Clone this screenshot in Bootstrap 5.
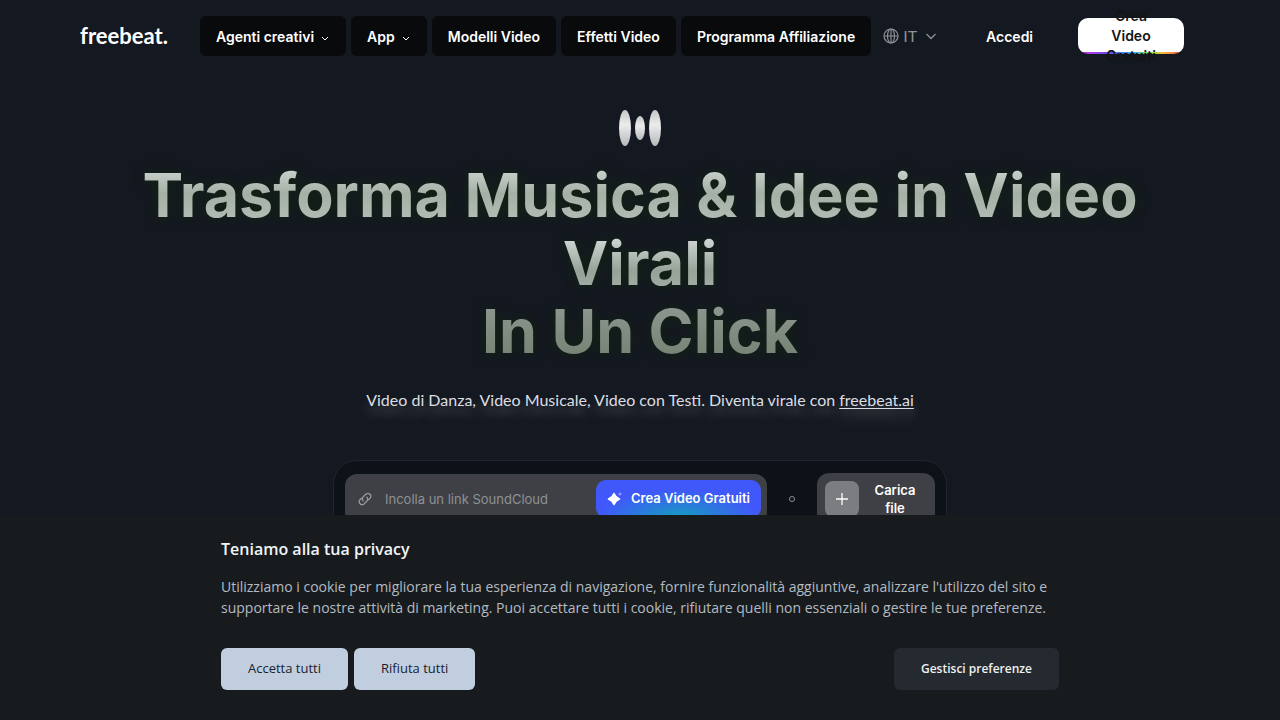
<!DOCTYPE html>
<html lang="it">
<head>
<meta charset="utf-8">
<meta name="viewport" content="width=device-width, initial-scale=1">
<title>freebeat.ai – Trasforma Musica &amp; Idee in Video Virali</title>
<link href="https://cdn.jsdelivr.net/npm/bootstrap@5.3.0/dist/css/bootstrap.min.css" rel="stylesheet">
<style>
  body { background: #141820; color: #fff; font-family: Inter, "Open Sans", sans-serif; min-height: 100vh; overflow-x: hidden; }
  .site-header { max-width: 1200px; height: 72px; padding: 0 56px 0 40px; }
  .brand { width: 120px; font-family: Lato, sans-serif; font-size: 22px; font-weight: 700; line-height: 24px; }
  .menu { gap: 5px; }
  .menu-btn { height: 40px; padding: 0 16px; background: #090a0b; border: 0; border-radius: 6px; color: #fff; font-size: 14px; font-weight: 600; white-space: nowrap; }
  .menu-btn svg { margin-left: 6px; }
  .menu-btn:hover, .menu-btn:focus { background: #1b1d20; color: #fff; }
  .lang-btn { color: #8d9095; font-family: Lato, sans-serif; font-size: 16px; border: 0; padding: 0; }
  .login-link { font-size: 14px; font-weight: 600; color: #fff; }
  .cta { width: 106px; height: 36px; padding: 0 20px; border: 0; border-radius: 10px; color: #141414; font-size: 14px; font-weight: 600; line-height: 20px;
    background: linear-gradient(90deg, #d63ad8, #6a48f0 28%, #28a8f5 52%, #8fdc3c 68%, #f6b83c 80%, #f0484a) bottom / 100% 2px no-repeat, #fff; }
  .hero { padding-top: 38px; }
  .headline { max-width: 1000px; margin: 15px auto 0; font-size: 61px; font-weight: 700; line-height: 68px; color: transparent;
    background: linear-gradient(180deg, #d8dcdb 0, #a5b0a5 16%, #b4bdb6 30%, #d8dcdb 36%, #96a398 54%, #a5afa8 65%, #8c958e 72%, #72806f 100%); background-clip: text; -webkit-background-clip: text; filter: drop-shadow(0 0 6px #10240f); }
  .tagline { margin: 23px 0 0; font-family: Lato, sans-serif; font-size: 16px; line-height: 24px; color: #dcdee3; text-shadow: 0 8px 12px rgba(255,255,255,.3); }
  .tagline a { color: inherit; text-underline-offset: 2px; }
  .composer { max-width: 614px; margin-top: 48px; padding: 12px 11px; background: #0d1118; border: 1px solid #20242b; border-radius: 24px; }
  .link-field { height: 50px; padding: 6px 6px 6px 12px; background: #3e4045; border-radius: 12px; }
  .link-field input { background: none; border: 0; color: #fff; font-size: 13px; line-height: 20px; outline: 0; min-width: 0; }
  .link-field input::placeholder { color: #8e9196; }
  .create-btn { height: 38px; padding: 0 11px; border: 0; border-radius: 10px; color: #fff; font-size: 13px; font-weight: 600; white-space: nowrap; background: radial-gradient(ellipse 80px 28px at 50% 100%, #149fbd, #4058fa); }
  .or-dot { width: 6px; height: 6px; margin: 0 22px; border: 1px solid #8e9196; border-radius: 50%; }
  .upload-btn { width: 118px; height: 52px; padding: 8px; border: 0; border-radius: 12px; background: #3e4045; color: #fff; font-size: 13px; font-weight: 600; line-height: 18px; }
  .plus-tile { width: 34px; height: 36px; border-radius: 8px; background: #7b7d80; }
  .consent { background: #181b1e; font-family: "Open Sans", "Noto Sans", sans-serif; padding: 23px 24px 30px; }
  .consent-body { max-width: 838px; }
  .consent h2 { font-size: 16px; line-height: 22px; font-weight: 600; color: #f2f5f8; margin: 0 0 16px; }
  .consent p { font-size: 14px; line-height: 21px; color: #b3bac2; margin: 0 0 30px; }
  .consent-actions { gap: 6px; }
  .consent-btn { height: 42px; padding: 0 27px; border: 0; border-radius: 6px; font-size: 13px; font-weight: 500; background: #c1cee0; color: #18222d; }
  .consent-btn.manage { background: #252930; color: #eef1f4; font-size: 12px; font-weight: 600; }
</style>
</head>
<body>
<header class="site-header container-fluid d-flex align-items-center">
  <a class="brand text-white text-decoration-none flex-shrink-0" href="#">freebeat.</a>
  <nav class="menu d-flex flex-shrink-0" aria-label="Principale">
    <button class="btn menu-btn" type="button">Agenti creativi<svg width="10" height="10" viewBox="0 0 10 10" fill="none" stroke="currentColor" aria-hidden="true"><path d="m2 4 3 3 3-3"/></svg></button>
    <button class="btn menu-btn" type="button">App<svg width="10" height="10" viewBox="0 0 10 10" fill="none" stroke="currentColor" aria-hidden="true"><path d="m2 4 3 3 3-3"/></svg></button>
    <button class="btn menu-btn" type="button">Modelli Video</button>
    <button class="btn menu-btn" type="button">Effetti Video</button>
    <button class="btn menu-btn" type="button">Programma Affiliazione</button>
  </nav>
  <button class="btn lang-btn d-flex align-items-center gap-1 flex-shrink-0 ms-2 px-1" type="button" aria-label="Lingua: IT">
    <svg width="16" height="16" viewBox="0 0 16 16" fill="none" stroke="currentColor" stroke-width="1.2" aria-hidden="true"><circle cx="8" cy="8" r="7"/><ellipse cx="8" cy="8" rx="3.5" ry="7"/><path d="M1 8h14M8 1v14"/></svg>
    <span>IT</span>
    <svg class="ms-1" width="12" height="12" viewBox="0 0 12 12" fill="none" stroke="currentColor" stroke-width="1.3" aria-hidden="true"><path d="m1.500 4 4.500 4.500L10.500 4"/></svg>
  </button>
  <a class="login-link text-decoration-none ms-auto" href="#">Accedi</a>
  <button class="btn cta d-flex align-items-center justify-content-center flex-shrink-0 ms-auto" type="button">Crea Video Gratuiti</button>
</header>

<main class="hero text-center">
  <svg class="d-block mx-auto" width="44" height="36" viewBox="0 0 44 36" aria-hidden="true">
    <defs><linearGradient id="bar" x1="0" x2="0" y1="0" y2="1"><stop offset="0" stop-color="#c3c5c7"/><stop offset=".4" stop-color="#ececec"/><stop offset="1" stop-color="#b6b8ba"/></linearGradient></defs>
    <g fill="url(#bar)"><ellipse cx="7" cy="18" rx="6" ry="18"/><ellipse cx="22" cy="18" rx="5" ry="12"/><ellipse cx="37" cy="18" rx="6" ry="18"/></g>
  </svg>
  <h1 class="headline">Trasforma Musica &amp; Idee in Video Virali<br>In Un Click</h1>
  <p class="tagline">Video di Danza, Video Musicale, Video con Testi. Diventa virale con <a href="#">freebeat.ai</a></p>
  <form class="composer mx-auto d-flex align-items-center">
    <div class="link-field d-flex align-items-center flex-grow-1">
      <svg class="flex-shrink-0" width="16" height="16" viewBox="0 0 16 16" fill="none" stroke="#999b9f" stroke-width="1.2" stroke-linecap="round" aria-hidden="true"><path d="M6.2 9.8a3 3 0 0 1 0-4.1L9 3a3 3 0 0 1 4.2 4.2l-1.6 1.5M9.8 6.2a3 3 0 0 1 0 4.1L7 13a3 3 0 0 1-4.2-4.2l1.6-1.5"/></svg>
      <label class="visually-hidden" for="track">Link del brano</label>
      <input class="flex-grow-1 ms-2 p-0 ps-1" id="track" type="text" placeholder="Incolla un link SoundCloud">
      <button class="btn create-btn d-flex align-items-center gap-2" type="button"><svg width="16" height="16" viewBox="0 0 16 16" fill="#fff" aria-hidden="true"><path d="M7 2.500Q8.500 6.500 12.500 8 8.500 9.500 7 13.500 5.500 9.500 1.500 8 5.500 6.500 7 2.500Z" stroke="#fff" stroke-width="1.6" stroke-linejoin="round"/><path d="M13 1q.4 1.600 2 2-1.600.4-2 2-.4-1.600-2-2 1.600-.4 2-2Z" opacity=".45"/></svg>Crea Video Gratuiti</button>
    </div>
    <span class="or-dot flex-shrink-0"></span>
    <button class="btn upload-btn d-flex align-items-center flex-shrink-0" type="button">
      <span class="plus-tile d-flex align-items-center justify-content-center flex-shrink-0"><svg width="12" height="12" viewBox="0 0 12 12" stroke="#fff" stroke-width="1.3" aria-hidden="true"><path d="M6 0v12M0 6h12"/></svg></span>
      <span class="flex-grow-1 ps-1">Carica<br>file</span>
    </button>
  </form>
</main>

<section class="consent fixed-bottom" aria-labelledby="consent-title">
  <div class="consent-body mx-auto">
    <h2 id="consent-title">Teniamo alla tua privacy</h2>
    <p>Utilizziamo i cookie per migliorare la tua esperienza di navigazione, fornire funzionalità aggiuntive, analizzare l'utilizzo del sito e supportare le nostre attività di marketing. Puoi accettare tutti i cookie, rifiutare quelli non essenziali o gestire le tue preferenze.</p>
    <div class="consent-actions d-flex">
      <button class="btn consent-btn" type="button">Accetta tutti</button>
      <button class="btn consent-btn" type="button">Rifiuta tutti</button>
      <button class="btn consent-btn manage ms-auto" type="button">Gestisci preferenze</button>
    </div>
  </div>
</section>
<script src="https://cdn.jsdelivr.net/npm/bootstrap@5.3.0/dist/js/bootstrap.bundle.min.js"></script>
</body>
</html>
